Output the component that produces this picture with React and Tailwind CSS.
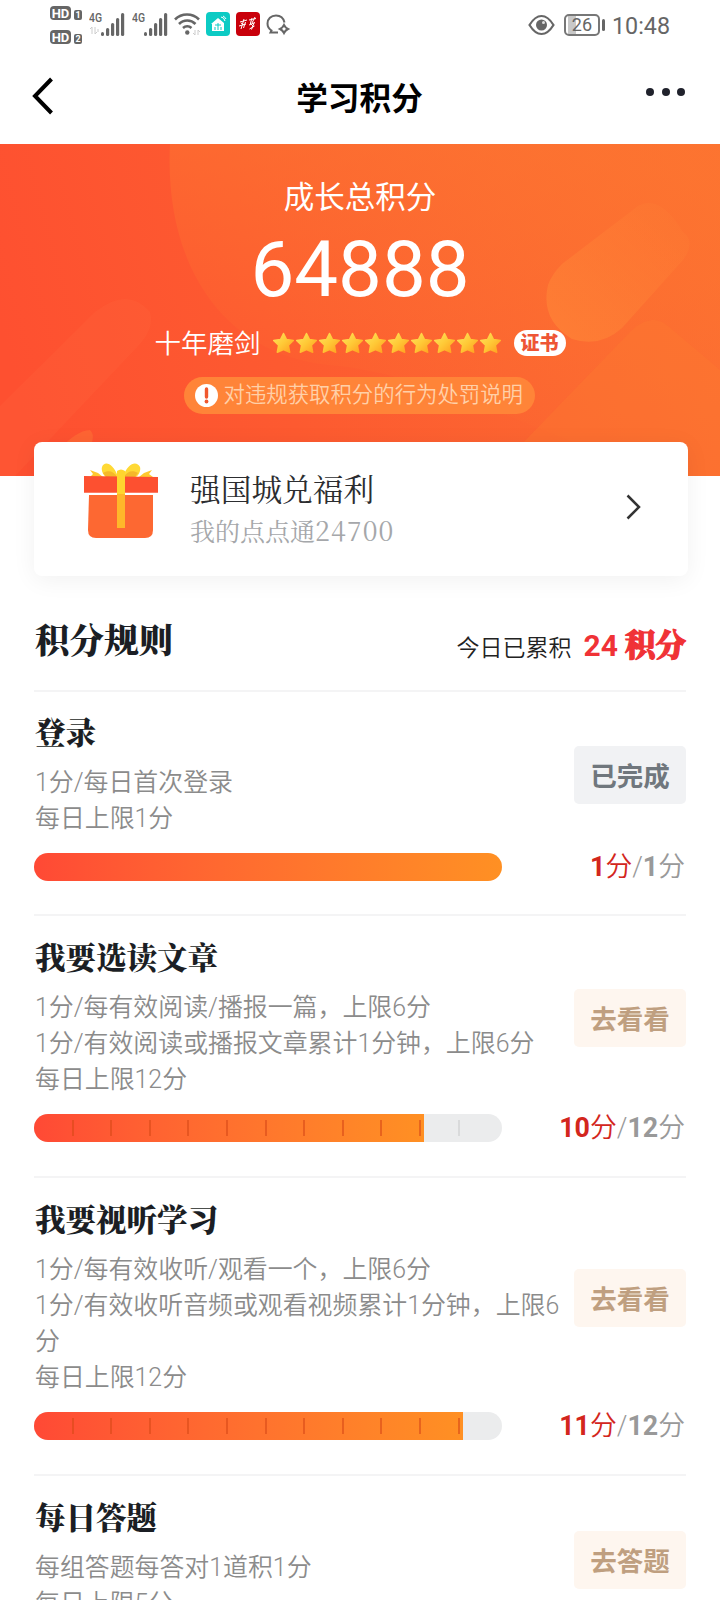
import { useId } from "react";

const rules = [
  {
    title: "登录",
    lines: ["1分/每日首次登录", "每日上限1分"],
    button: "已完成",
    done: true,
    score: 1,
    total: 1,
  },
  {
    title: "我要选读文章",
    lines: [
      "1分/每有效阅读/播报一篇，上限6分",
      "1分/有效阅读或播报文章累计1分钟，上限6分",
      "每日上限12分",
    ],
    button: "去看看",
    score: 10,
    total: 12,
  },
  {
    title: "我要视听学习",
    lines: [
      "1分/每有效收听/观看一个，上限6分",
      "1分/有效收听音频或观看视频累计1分钟，上限6分",
      "每日上限12分",
    ],
    button: "去看看",
    score: 11,
    total: 12,
  },
  {
    title: "每日答题",
    lines: ["每组答题每答对1道积1分", "每日上限5分"],
    button: "去答题",
    score: 0,
    total: 5,
  },
];

function Signal({ arrows }) {
  return (
    <svg width="38" height="26" viewBox="0 0 38 26" fill="#666">
      <text x="0" y="10" fontSize="12.500" fontWeight="500" fontFamily="Roboto" textLength="13" lengthAdjust="spacingAndGlyphs">4G</text>
      {arrows && <path d="M3 15v7M3 15l-2 2M6 15v7l2-2M9 17v3" stroke="#ccc" fill="none" />}
      <rect x="12" y="20" width="3" height="4" rx="1.5" />
      <rect x="17" y="16" width="3.2" height="8" rx="1.5" />
      <rect x="22" y="11" width="3.2" height="13" rx="1.5" />
      <rect x="27" y="6" width="3.2" height="18" rx="1.5" />
      <rect x="32" y="1" width="3.2" height="23" rx="1.5" />
    </svg>
  );
}

function HdBadge({ n }) {
  return (
    <div className="flex h-[15px] items-end gap-[3px]">
      <span className="flex h-[14px] w-[21px] items-center justify-center rounded-[4px] bg-[#666] text-[13px] leading-none font-bold text-white">HD</span>
      <span className="flex h-[10px] w-[8px] items-center justify-center rounded-[2px] bg-[#666] text-[9px] leading-none font-bold text-white">{n}</span>
    </div>
  );
}

function StatusBar() {
  return (
    <div className="flex h-[50px] items-start pl-[50px] text-[#666]">
      <div className="flex flex-col gap-[9px] pt-[5px]">
        <HdBadge n="1" />
        <HdBadge n="2" />
      </div>
      <div className="ml-[7px] flex gap-[5px] pt-[12px]">
        <Signal arrows />
        <Signal />
      </div>
      <svg className="mt-[12px] ml-[4px]" width="27" height="24" viewBox="0 0 27 24" fill="none" stroke="#666" strokeWidth="2.6">
        <path d="M1 7.500a17 17 0 0 1 24 0M5 12a11.500 11.500 0 0 1 16.500 0M9 16a6.500 6.500 0 0 1 8.500 0" />
        <circle cx="13.300" cy="20.500" r="2.200" fill="#666" stroke="none" />
        <path d="M21 18v5l-2-2M24 23v-5l2 2" stroke="#ccc" strokeWidth="1" />
      </svg>
      <svg className="mt-[12px] ml-[5px]" width="24" height="24" viewBox="0 0 24 24">
        <rect width="24" height="24" rx="4" fill="#0ccbc4" />
        <path d="M5 12l7-6 6 5v8H6v-7z" fill="#fff" />
        <path d="M9 13h6M12 11v7M9 18v-3M15 18v-3" stroke="#0ccbc4" fill="none" />
        <path d="M15 5q3 0 4 4M17 4q2 1 3 3" stroke="#fff" fill="none" />
      </svg>
      <svg className="mt-[12px] ml-[6px]" width="24" height="24" viewBox="0 0 24 24">
        <rect width="24" height="24" rx="4" fill="#c9000b" />
        <path
          d="M4 10l7-2M8 7l-3 10M3 14l7-2M9.500 10l-2 6M5 11l3 2M13 8l7-1.500M16 6l-1.500 5M19 5l-3 6M13 13l6-2.500M18 11l-2.500 6.500M13.500 17l5-3M14 11l4 4"
          stroke="#fff"
          strokeWidth="1"
          fill="none"
        />
      </svg>
      <svg className="mt-[13px] ml-[6px]" width="25" height="24" viewBox="0 0 25 24" fill="none" stroke="#666" strokeWidth="2">
        <path d="M18.500 9.500C17.500 5 14 2.500 10 2.500C5 2.500 1.500 6 1.500 10.500C1.500 13.500 3 16 5.500 17.500L4.500 19.500H12" />
        <path d="M18 12q1.300 2.700 4 4q-2.700 1.300-4 4q-1.300-2.700-4-4q2.700-1.300 4-4z" strokeWidth="2" />
      </svg>
      <div className="mr-[50px] ml-auto flex items-center pt-[12px]">
        <svg width="27" height="22" viewBox="0 0 27 22" fill="none" stroke="#666" strokeWidth="2.200">
          <path d="M1.500 11Q7 2 13.500 2T25.500 11Q20 20 13.500 20T1.500 11z" />
          <circle cx="13.500" cy="11" r="5.500" fill="#666" stroke="none" />
          <circle cx="15.500" cy="8.500" r="1.500" fill="#ddd" stroke="none" />
        </svg>
        <div className="ml-[9px] flex h-[22px] w-[36px] items-center justify-center rounded-[5px] border-2 border-[#777] bg-[linear-gradient(90deg,#fff_2px,#c8c8c8_2px,#c8c8c8_10px,#fff_10px)] text-[18px] leading-none">26</div>
        <div className="ml-[2px] h-[12px] w-[3px] rounded-sm bg-[#666]" />
        <span className="ml-[7px] pt-[2px] text-[23.300px] leading-[24px]">10:48</span>
      </div>
    </div>
  );
}

function Star() {
  const id = useId();
  return (
    <svg width="23" height="22" viewBox="0 0 23 22">
      <defs>
        <linearGradient id={id} x1="0" y1="0" x2="1" y2="1">
          <stop offset="0" stopColor="#ffe25c" />
          <stop offset="0.5" stopColor="#ffc936" />
          <stop offset="1" stopColor="#ff9d1e" />
        </linearGradient>
      </defs>
      <path
        d="M11.500 1.500l3 6 6.800 1-4.900 4.800 1.300 7-6.200-2.800-6.200 2.800 1.300-7-4.900-4.800 6.800-1z"
        fill={`url(#${id})`}
        stroke={`url(#${id})`}
        strokeWidth="1.5"
        strokeLinejoin="round"
      />
    </svg>
  );
}

function Gift() {
  return (
    <svg width="76" height="78" viewBox="0 0 76 78">
      <path d="M7 8l8 3 5 4H7l3-3zM69 8l-8 3-5 4h14l-4-3z" fill="#ffc82e" />
      <path d="M35 15C30 0 21-1 19 5c-1 4 1 8 4 10zM40 15C45 0 54-1 57 5c1 4-1 8-4 10z" fill="#ffd935" />
      <path d="M34 15c-3-6-9-7-14-4l3 4zM41 15c3-6 9-7 14-4l-3 4z" fill="#f5b82a" />
      <path d="M1 14l74 1v17H1z" fill="#fd5030" />
      <path d="M6 33h64v35q0 8-8 8H13q-8 0-8-8z" fill="#fd6832" />
      <path d="M1 31.500h74" stroke="#fff" strokeWidth="1.500" />
      <path d="M34 9q4-3 8 0v25h-8z" fill="#ffd52f" />
      <path d="M34 32h8v34h-8z" fill="#ffb72a" />
    </svg>
  );
}

function Hero() {
  return (
    <div className="relative h-[332px] overflow-hidden bg-[linear-gradient(75deg,#fe5030_5%,#fd5a30_38%,#fc6631_72%,#fc6e31)]">
      <svg className="absolute inset-0" width="720" height="332" viewBox="0 0 720 332">
        <defs>
          <linearGradient id="disc" x1="0.3" y1="1" x2="0.6" y2="0">
            <stop offset="0.15" stopColor="#fd7830" stopOpacity="0" />
            <stop offset="1" stopColor="#fd7830" stopOpacity="0.6" />
          </linearGradient>
          <linearGradient id="pill" x1="0" y1="1" x2="1" y2="0">
            <stop offset="0" stopColor="#ff8436" stopOpacity="0.75" />
            <stop offset="1" stopColor="#ff8436" stopOpacity="0.1" />
          </linearGradient>
        </defs>
        <path d="M170 0C164 120 222 215 340 222C480 240 600 332 720 332V0z" fill="url(#disc)" />
        <path d="M638 62Q660 50 683 88Q696 98 683 116L622 184Q600 204 572 195Q540 176 548 141Q552 130 562 120z" fill="url(#pill)" />
        <path d="M520 302L632 186Q652 168 668 182L720 226V332H495z" fill="#fd7c30" fillOpacity="0.35" />
        <path d="M0 262L95 168Q128 142 150 168Q155 184 138 202L15 332H0z" fill="#ff7040" fillOpacity="0.18" />
        <path d="M55 310Q76 286 90 286Q98 294 84 312z" fill="#ff7b38" fillOpacity="0.45" />
      </svg>
      <div className="relative flex flex-col items-center pt-[31px] text-white">
        <div className="text-[30.500px] leading-[46px]">成长总积分</div>
        <div className="mt-[3px] text-[78px] leading-[92px]">64888</div>
        <div className="mt-[7px] flex h-[40px] items-center">
          <span className="pt-[2px] text-[26.500px] font-[350]">十年磨剑</span>
          <div className="ml-[11px] flex">
            {Array.from({ length: 10 }, (_, i) => (
              <Star key={i} />
            ))}
          </div>
          <span className="ml-[12px] flex h-[26px] w-[52px] items-center justify-center rounded-full bg-white text-[19px] leading-none font-black text-[#ee5535]">证书</span>
        </div>
        <div className="mt-[14px] mr-[2px] flex h-[37px] w-[351px] items-center rounded-full bg-[#ff8438] pl-[11px] text-[21.400px] font-[350] text-[#ffd0a8]">
          <svg className="mr-[6px]" width="23" height="23" viewBox="0 0 23 23">
            <circle cx="11.500" cy="11.500" r="11.500" fill="#fff" />
            <path d="M11.500 5v8" stroke="#f0582f" strokeWidth="3.400" strokeLinecap="round" />
            <circle cx="11.500" cy="17.500" r="1.900" fill="#f0582f" />
          </svg>
          对违规获取积分的行为处罚说明
        </div>
      </div>
    </div>
  );
}

function ProgressBar({ score, total }) {
  return (
    <div className="relative h-[28px] w-[468px] overflow-hidden rounded-full bg-[#ebeced]">
      <div
        className="h-full bg-linear-to-r from-[#ff4935] to-[#ff9023]"
        style={{ width: `${(score / total) * 100}%` }}
      />
      {total === 12 &&
        Array.from({ length: 11 }, (_, i) => (
          <div
            key={i}
            className={`absolute top-[6px] h-[16px] w-[2px] ${i < score ? "bg-[#d94a18]/60" : "bg-[#d9dadb]"}`}
            style={{ left: 37.5 + i * 38.6 }}
          />
        ))}
    </div>
  );
}

function Rule({ rule }) {
  return (
    <div className="border-t-2 border-[#f4f4f5] pt-[17px] pb-[34.500px] first:pt-[16px] first:pb-[33.500px]">
      <div className="flex items-center justify-between">
        <div className="w-[530px] shrink-0">
          <h3 className="pl-px font-['Noto_Serif_CJK_SC','Noto_Sans_CJK_SC',serif] text-[30.500px] leading-[46px] font-black text-[#1b1e24]">{rule.title}</h3>
          <div className="mt-[11px] pl-px text-[24.900px] leading-[36px] font-[350] text-[#8b8b8b]">
            {rule.lines.map((line) => (
              <p key={line}>{line}</p>
            ))}
          </div>
        </div>
        <button
          className={`mt-[4px] h-[58px] w-[112px] shrink-0 rounded-[5px] pt-[4px] text-[26.500px] font-bold ${
            rule.done ? "bg-[#f1f2f4] text-[#70777d]" : "bg-[#fef6ef] text-[#bf9f80]"
          }`}
        >
          {rule.button}
        </button>
      </div>
      <div className="mt-[15.500px] flex h-[28px] items-center justify-between">
        <ProgressBar score={rule.score} total={rule.total} />
        <div className="pr-px text-[26.800px] leading-[28px] font-[350] text-[#999]">
          <span className="text-[#d3261d]">
            <b className="font-bold">{rule.score}</b>分
          </span>
          /<b className="font-bold">{rule.total}</b>分
        </div>
      </div>
    </div>
  );
}

export default function App() {
  return (
    <div lang="zh-CN" className="h-[1600px] w-[720px] overflow-hidden bg-white font-[Roboto,'Noto_Sans_CJK_SC',sans-serif]">
      <StatusBar />

      {/* Nav */}
      <div className="flex h-[94px] items-center justify-between pr-[35px] pl-[32px]">
        <svg width="53" height="40" viewBox="0 0 53 40" fill="none" stroke="#000" strokeWidth="4">
          <path d="M19.500 2L3 19l16.500 17" />
        </svg>
        <h1 className="pt-[5px] pl-[8px] text-[31.700px] font-bold text-black">学习积分</h1>
        <div className="mb-[10px] flex w-[59px] justify-end gap-[7.500px]">
          <i className="h-[8px] w-[8px] rounded-full bg-[#20222c]" />
          <i className="h-[8px] w-[8px] rounded-full bg-[#20222c]" />
          <i className="h-[8px] w-[8px] rounded-full bg-[#20222c]" />
        </div>
      </div>

      <Hero />

      <div className="px-[34px]">
        <div className="relative mt-[-34px] flex h-[134px] w-[654px] items-center rounded-[8px] bg-white pr-[47px] pl-[49px] shadow-[0_4px_24px_rgba(0,0,0,0.06)]">
          <div className="mb-[16px]">
            <Gift />
          </div>
          <div className="ml-[31px] font-['Noto_Serif_CJK_SC','Noto_Sans_CJK_SC',serif]">
            <div className="text-[30.700px] leading-[42px] text-[#2c2d30]">强国城兑福利</div>
            <div className="text-[25px] leading-[42px] text-[#a5a7aa]">
              我的点点通<span className="text-[26.500px] tracking-[1.200px]">24700</span>
            </div>
          </div>
          <svg className="mb-[4px] ml-auto" width="15" height="26" viewBox="0 0 15 26" fill="none" stroke="#333" strokeWidth="2.500">
            <path d="M1.500 1.500L13 13 1.500 24.500" />
          </svg>
        </div>

        <div className="flex h-[114px] items-center justify-between pt-[12px]">
          <h2 className="pl-px font-['Noto_Serif_CJK_SC','Noto_Sans_CJK_SC',serif] text-[34.500px] font-black text-[#1b1e24]">积分规则</h2>
          <div className="flex items-baseline pt-[10px] text-[23px] font-[350] text-[#222]">
            今日已累积
            <span className="ml-[12px] text-[30px] font-bold text-[#f03236]">24</span>
            <span className="ml-[7px] font-['Noto_Serif_CJK_SC','Noto_Sans_CJK_SC',serif] text-[30.500px] font-black text-[#f03236] [-webkit-text-stroke:1.2px_#f03236]">积分</span>
          </div>
        </div>

        <div className="w-[652px]">
          {rules.map((rule) => (
            <Rule key={rule.title} rule={rule} />
          ))}
        </div>
      </div>
    </div>
  );
}
